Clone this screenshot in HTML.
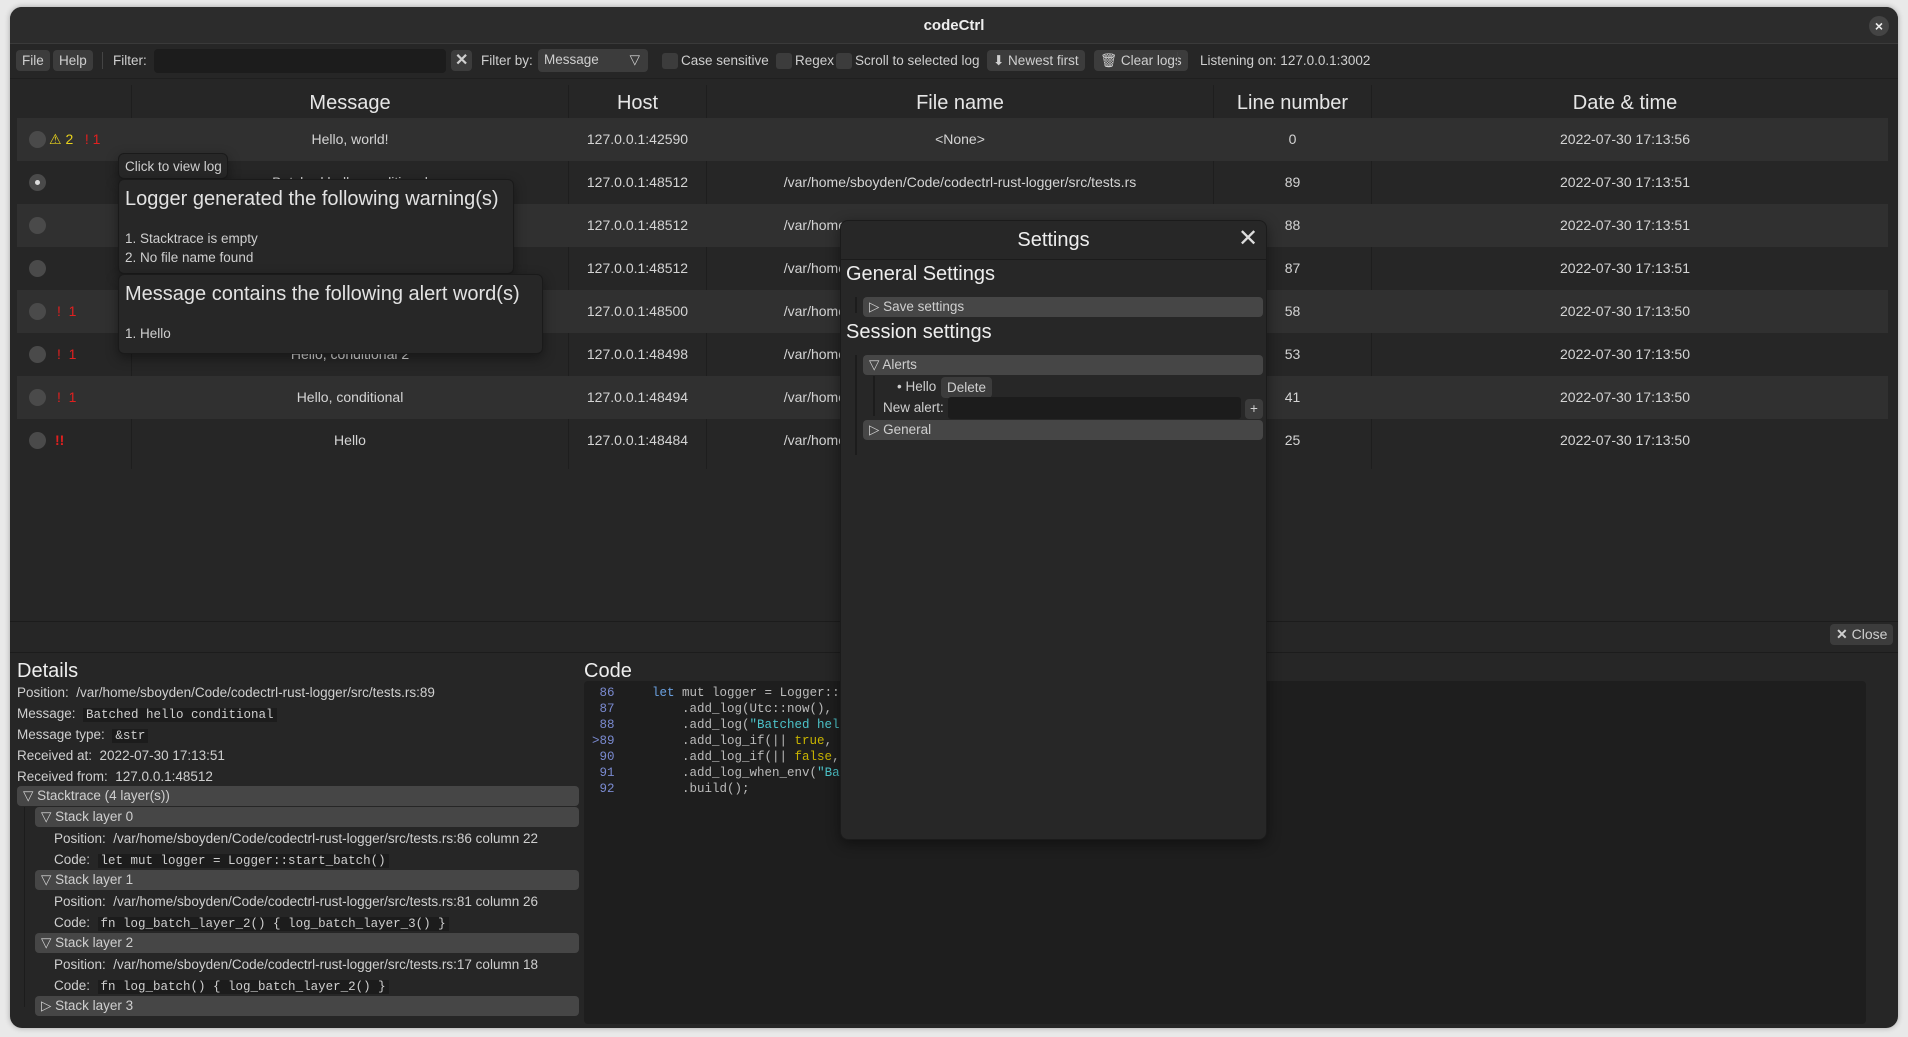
<!DOCTYPE html>
<html><head><meta charset="utf-8"><style>
*{box-sizing:border-box;margin:0;padding:0}
body{width:1908px;height:1037px;background:#e9e9e9;font-family:"Liberation Sans",sans-serif;color:#cfcfcf;position:relative;overflow:hidden;font-size:14px}
.a{position:absolute}
.win{left:10px;top:7px;width:1888px;height:1021px;background:#262626;border-radius:12px;overflow:hidden;box-shadow:0 0 6px rgba(0,0,0,.3)}
.btn{background:#3c3c3c;border-radius:4px;padding:0 6px;height:21px;line-height:21px;color:#cfcfcf;font-size:13.5px;white-space:nowrap}
.cb{width:16px;height:16px;background:#3c3c3c;border-radius:3px}
.row{left:7px;width:1871px;height:43px}
.c{text-align:center;line-height:43px;font-size:14px;color:#d4d4d4;white-space:nowrap}
.hd{font-size:20px;color:#e6e6e6;text-align:center}
.dot{width:17px;height:17px;border-radius:50%;background:#4a4a4a;left:12px;top:13px}
.red{color:#e0201f}
.tip{background:#272727;border:1px solid #1a1a1a;border-radius:6px;box-shadow:0 4px 12px rgba(0,0,0,.4);white-space:nowrap}
.hdr{background:#464646;border-radius:4px;height:20px;line-height:20px;font-size:13.5px;padding-left:6px}
.mono{font-family:"Liberation Mono",monospace;font-size:12.5px}
.ln{color:#7a8ad0}
.dl div{height:21px;line-height:21px}
</style></head><body>
<div class="a win">
 <div class="a" style="left:0;top:0;width:1888px;height:37px;background:#2c2c2c;border-bottom:1px solid #3a3a3a"></div>
 <div class="a" style="left:0;top:10px;width:1888px;text-align:center;font-weight:bold;font-size:15px;color:#eee">codeCtrl</div>
 <div class="a" style="left:1859px;top:9px;width:20px;height:20px;border-radius:50%;background:#444;color:#eee;text-align:center;line-height:20px;font-size:14px;font-weight:bold">×</div>
 <div class="a" style="left:0;top:38px;width:1888px;height:34px;background:#262626;border-bottom:1px solid #1f1f1f"></div>
 <div class="a btn" style="left:6px;top:43px">File</div>
 <div class="a btn" style="left:43px;top:43px">Help</div>
 <div class="a" style="left:92px;top:45px;width:1px;height:17px;background:#444"></div>
 <div class="a" style="left:103px;top:46px;font-size:13.5px">Filter:</div>
 <div class="a" style="left:144px;top:42px;width:292px;height:24px;background:#1c1c1c;border-radius:4px"></div>
 <div class="a btn" style="left:441px;top:43px;padding:0 4px;font-weight:bold;font-size:16px">✕</div>
 <div class="a" style="left:471px;top:46px;font-size:13.5px">Filter by:</div>
 <div class="a btn" style="left:528px;top:42px;width:110px;height:23px">Message<span style="position:absolute;right:8px;top:0">▽</span></div>
 <div class="a cb" style="left:652px;top:46px"></div><div class="a" style="left:671px;top:46px;font-size:13.5px">Case sensitive</div>
 <div class="a cb" style="left:766px;top:46px"></div><div class="a" style="left:785px;top:46px;font-size:13.5px">Regex</div>
 <div class="a cb" style="left:826px;top:46px"></div><div class="a" style="left:845px;top:46px;font-size:13.5px">Scroll to selected log</div>
 <div class="a btn" style="left:977px;top:43px">⬇ Newest first</div>
 <div class="a btn" style="left:1084px;top:43px">🗑 Clear logs</div>
 <div class="a" style="left:1167px;top:45px;width:1px;height:17px;background:#444"></div>
 <div class="a" style="left:1190px;top:46px;font-size:13.5px">Listening on: 127.0.0.1:3002</div>
 <div class="a" style="left:121px;top:78px;width:1px;height:384px;background:#1e1e1e"></div>
 <div class="a" style="left:558px;top:78px;width:1px;height:384px;background:#1e1e1e"></div>
 <div class="a" style="left:696px;top:78px;width:1px;height:384px;background:#1e1e1e"></div>
 <div class="a" style="left:1203px;top:78px;width:1px;height:384px;background:#1e1e1e"></div>
 <div class="a" style="left:1361px;top:78px;width:1px;height:384px;background:#1e1e1e"></div>
 <div class="a hd" style="left:122px;width:436px;top:85px">Message</div>
 <div class="a hd" style="left:559px;width:137px;top:85px">Host</div>
 <div class="a hd" style="left:697px;width:506px;top:85px">File name</div>
 <div class="a hd" style="left:1204px;width:157px;top:85px">Line number</div>
 <div class="a hd" style="left:1362px;width:506px;top:85px">Date &amp; time</div>
 <div class="a row" style="top:111px;background:#303030"><div class="a dot"></div><div class="a" style="left:32px;top:13px;color:#e8d21c">⚠ 2 <span class="red">&nbsp;&nbsp;! 1</span></div></div>
 <div class="a row" style="top:154px"><div class="a dot"><div style="width:5px;height:5px;background:#ddd;border-radius:50%;margin:6px"></div></div></div>
 <div class="a row" style="top:197px;background:#303030"><div class="a dot"></div></div>
 <div class="a row" style="top:240px"><div class="a dot"></div></div>
 <div class="a row" style="top:283px;background:#303030"><div class="a dot"></div><div class="a red" style="left:40px;top:13px">!&nbsp; 1</div></div>
 <div class="a row" style="top:326px"><div class="a dot"></div><div class="a red" style="left:40px;top:13px">!&nbsp; 1</div></div>
 <div class="a row" style="top:369px;background:#303030"><div class="a dot"></div><div class="a red" style="left:40px;top:13px">!&nbsp; 1</div></div>
 <div class="a row" style="top:412px"><div class="a dot"></div><div class="a red" style="left:38px;top:13px;font-weight:bold">!!</div></div>
 <div class="a c" style="left:122px;width:436px;top:111px">Hello, world!</div>
 <div class="a c" style="left:122px;width:436px;top:154px">Batched hello conditional</div>
 <div class="a c" style="left:122px;width:436px;top:326px">Hello, conditional 2</div>
 <div class="a c" style="left:122px;width:436px;top:369px">Hello, conditional</div>
 <div class="a c" style="left:122px;width:436px;top:412px">Hello</div>
 <div class="a c" style="left:559px;width:137px;top:111px">127.0.0.1:42590</div>
 <div class="a c" style="left:559px;width:137px;top:154px">127.0.0.1:48512</div>
 <div class="a c" style="left:559px;width:137px;top:197px">127.0.0.1:48512</div>
 <div class="a c" style="left:559px;width:137px;top:240px">127.0.0.1:48512</div>
 <div class="a c" style="left:559px;width:137px;top:283px">127.0.0.1:48500</div>
 <div class="a c" style="left:559px;width:137px;top:326px">127.0.0.1:48498</div>
 <div class="a c" style="left:559px;width:137px;top:369px">127.0.0.1:48494</div>
 <div class="a c" style="left:559px;width:137px;top:412px">127.0.0.1:48484</div>
 <div class="a c" style="left:697px;width:506px;top:111px">&lt;None&gt;</div>
 <div class="a c" style="left:697px;width:506px;top:154px">/var/home/sboyden/Code/codectrl-rust-logger/src/tests.rs</div>
 <div class="a c" style="left:697px;width:506px;top:197px">/var/home/sboyden/Code/codectrl-rust-logger/src/tests.rs</div>
 <div class="a c" style="left:697px;width:506px;top:240px">/var/home/sboyden/Code/codectrl-rust-logger/src/tests.rs</div>
 <div class="a c" style="left:697px;width:506px;top:283px">/var/home/sboyden/Code/codectrl-rust-logger/src/tests.rs</div>
 <div class="a c" style="left:697px;width:506px;top:326px">/var/home/sboyden/Code/codectrl-rust-logger/src/tests.rs</div>
 <div class="a c" style="left:697px;width:506px;top:369px">/var/home/sboyden/Code/codectrl-rust-logger/src/tests.rs</div>
 <div class="a c" style="left:697px;width:506px;top:412px">/var/home/sboyden/Code/codectrl-rust-logger/src/tests.rs</div>
 <div class="a c" style="left:1204px;width:157px;top:111px">0</div>
 <div class="a c" style="left:1204px;width:157px;top:154px">89</div>
 <div class="a c" style="left:1204px;width:157px;top:197px">88</div>
 <div class="a c" style="left:1204px;width:157px;top:240px">87</div>
 <div class="a c" style="left:1204px;width:157px;top:283px">58</div>
 <div class="a c" style="left:1204px;width:157px;top:326px">53</div>
 <div class="a c" style="left:1204px;width:157px;top:369px">41</div>
 <div class="a c" style="left:1204px;width:157px;top:412px">25</div>
 <div class="a c" style="left:1362px;width:506px;top:111px">2022-07-30 17:13:56</div>
 <div class="a c" style="left:1362px;width:506px;top:154px">2022-07-30 17:13:51</div>
 <div class="a c" style="left:1362px;width:506px;top:197px">2022-07-30 17:13:51</div>
 <div class="a c" style="left:1362px;width:506px;top:240px">2022-07-30 17:13:51</div>
 <div class="a c" style="left:1362px;width:506px;top:283px">2022-07-30 17:13:50</div>
 <div class="a c" style="left:1362px;width:506px;top:326px">2022-07-30 17:13:50</div>
 <div class="a c" style="left:1362px;width:506px;top:369px">2022-07-30 17:13:50</div>
 <div class="a c" style="left:1362px;width:506px;top:412px">2022-07-30 17:13:50</div>
 <div class="a tip" style="left:108px;top:146px;width:110px;height:26px;font-size:13.5px;padding:5px 6px">Click to view log</div>
 <div class="a tip" style="left:108px;top:172px;width:396px;height:95px;padding:8px 6px">
  <div style="font-size:20px;color:#e2e2e2">Logger generated the following warning(s)</div>
  <div style="margin-top:18px;font-size:13.5px;line-height:19px">1. Stacktrace is empty<br>2. No file name found</div></div>
 <div class="a tip" style="left:108px;top:267px;width:425px;height:80px;padding:8px 6px">
  <div style="font-size:20px;color:#e2e2e2">Message contains the following alert word(s)</div>
  <div style="margin-top:20px;font-size:13.5px">1. Hello</div></div>
 <div class="a" style="left:0;top:614px;width:1888px;height:1px;background:#1c1c1c"></div>
 <div class="a" style="left:0;top:645px;width:1888px;height:1px;background:#1c1c1c"></div>
 <div class="a btn" style="left:1820px;top:617px;height:21px;font-size:14px"><b>✕</b> Close</div>
 <div class="a" style="left:7px;top:653px;font-size:20px;color:#eee">Details</div>
 <div class="a" style="left:574px;top:653px;font-size:20px;color:#eee">Code</div>
 <div class="a dl" style="left:7px;top:675px;font-size:13.5px">
  <div>Position:&nbsp; /var/home/sboyden/Code/codectrl-rust-logger/src/tests.rs:89</div>
  <div>Message:&nbsp; <span class="mono" style="background:#1c1c1c;padding:0 3px">Batched hello conditional</span></div>
  <div>Message type:&nbsp; <span class="mono" style="background:#1c1c1c;padding:0 3px">&amp;str</span></div>
  <div>Received at:&nbsp; 2022-07-30 17:13:51</div>
  <div>Received from:&nbsp; 127.0.0.1:48512</div>
 </div>
 <div class="a hdr" style="left:7px;top:779px;width:562px">▽ Stacktrace (4 layer(s))</div>
 <div class="a" style="left:14px;top:800px;width:1px;height:200px;background:#1c1c1c"></div>
 <div class="a hdr" style="left:25px;top:800px;width:544px">▽ Stack layer 0</div>
 <div class="a dl" style="left:44px;top:821px;font-size:13.5px"><div>Position:&nbsp; /var/home/sboyden/Code/codectrl-rust-logger/src/tests.rs:86 column 22</div><div>Code:&nbsp; <span class="mono" style="background:#1c1c1c;padding:0 3px">let mut logger = Logger::start_batch()</span></div></div>
 <div class="a hdr" style="left:25px;top:863px;width:544px">▽ Stack layer 1</div>
 <div class="a dl" style="left:44px;top:884px;font-size:13.5px"><div>Position:&nbsp; /var/home/sboyden/Code/codectrl-rust-logger/src/tests.rs:81 column 26</div><div>Code:&nbsp; <span class="mono" style="background:#1c1c1c;padding:0 3px">fn log_batch_layer_2() { log_batch_layer_3() }</span></div></div>
 <div class="a hdr" style="left:25px;top:926px;width:544px">▽ Stack layer 2</div>
 <div class="a dl" style="left:44px;top:947px;font-size:13.5px"><div>Position:&nbsp; /var/home/sboyden/Code/codectrl-rust-logger/src/tests.rs:17 column 18</div><div>Code:&nbsp; <span class="mono" style="background:#1c1c1c;padding:0 3px">fn log_batch() { log_batch_layer_2() }</span></div></div>
 <div class="a hdr" style="left:25px;top:989px;width:544px">▷ Stack layer 3</div>
 <div class="a" style="left:574px;top:674px;width:1282px;height:343px;background:#1e1e1e;border-radius:4px"></div>
 <div class="a mono" style="left:582px;top:678px;line-height:16px;white-space:pre;color:#bbb"><span class="ln"> 86</span>     <span style="color:#6aa0e0">let</span> mut logger = Logger::start_batch()
<span class="ln"> 87</span>         .add_log(Utc::now(), <span style="color:#c8b400">None</span>)
<span class="ln"> 88</span>         .add_log(<span style="color:#4cc3c9">"Batched hello"</span>)
<span class="ln">&gt;89</span>         .add_log_if(|| <span style="color:#c8b400">true</span>, <span style="color:#4cc3c9">"B</span>
<span class="ln"> 90</span>         .add_log_if(|| <span style="color:#c8b400">false</span>, "
<span class="ln"> 91</span>         .add_log_when_env(<span style="color:#4cc3c9">"Batc</span>
<span class="ln"> 92</span>         .build();</div>
 <div class="a" style="left:830px;top:213px;width:427px;height:620px;background:#272727;border:1px solid #1b1b1b;border-radius:8px;box-shadow:0 4px 14px rgba(0,0,0,.45)">
  <div class="a" style="left:0;width:425px;text-align:center;top:8px;font-size:20px;color:#eee">Settings</div>
  <div class="a" style="left:397px;top:3px;font-size:24px;color:#ddd">✕</div>
  <div class="a" style="left:0;top:38px;width:425px;height:1px;background:#1b1b1b"></div>
  <div class="a" style="left:5px;top:42px;font-size:20px;color:#eee">General Settings</div>
  <div class="a" style="left:14px;top:76px;width:2px;height:16px;background:#1c1c1c"></div>
  <div class="a hdr" style="left:22px;top:76px;width:400px">▷ Save settings</div>
  <div class="a" style="left:5px;top:100px;font-size:20px;color:#eee">Session settings</div>
  <div class="a" style="left:14px;top:134px;width:2px;height:100px;background:#1c1c1c"></div>
  <div class="a hdr" style="left:22px;top:134px;width:400px">▽ Alerts</div>
  <div class="a" style="left:32px;top:155px;width:2px;height:40px;background:#1c1c1c"></div>
  <div class="a" style="left:56px;top:158px;font-size:13.5px">• Hello</div>
  <div class="a btn" style="left:100px;top:156px">Delete</div>
  <div class="a" style="left:42px;top:179px;font-size:13.5px">New alert:</div>
  <div class="a" style="left:107px;top:176px;width:293px;height:22px;background:#1c1c1c;border-radius:3px"></div>
  <div class="a btn" style="left:404px;top:178px;padding:0 5px;height:20px;line-height:20px">+</div>
  <div class="a hdr" style="left:22px;top:199px;width:400px">▷ General</div>
 </div>
</div>
</body></html>
